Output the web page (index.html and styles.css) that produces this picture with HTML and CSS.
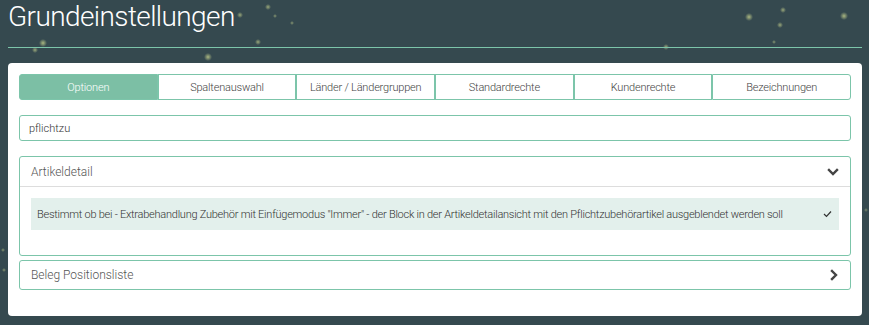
FILE: index.html
```html
<!DOCTYPE html>
<html lang="de">
<head>
  <meta charset="UTF-8">
  <title>Grundeinstellungen</title>
  <link rel="stylesheet" href="styles.css">
</head>
<body>
  <h1 class="page-title">Grundeinstellungen</h1>

  <div class="card">
    <!-- Reiter -->
    <div class="tabs">
      <div class="tab active">Optionen</div>
      <div class="tab">Spaltenauswahl</div>
      <div class="tab">Länder / Ländergruppen</div>
      <div class="tab">Standardrechte</div>
      <div class="tab">Kundenrechte</div>
      <div class="tab">Bezeichnungen</div>
    </div>

    <input class="search" type="text" value="pflichtzu">

    <!-- Gruppen -->
    <div class="panel">
      <div class="panel-head">
        <span>Artikeldetail</span>
        <svg class="chev" width="12" height="12" viewBox="0 0 12 12"><polyline points="2,4 6,8 10,4" fill="none" stroke="#444" stroke-width="2.4" stroke-linecap="square"/></svg>
      </div>
      <div class="panel-body">
        <div class="option">
          <span>Bestimmt ob bei - Extrabehandlung Zubehör mit Einfügemodus "Immer" - der Block in der Artikeldetailansicht mit den Pflichtzubehörartikel ausgeblendet werden soll</span>
          <svg width="9" height="8" viewBox="0 0 9 8"><polyline points="1,4 3.5,6.5 8,1.5" fill="none" stroke="#333" stroke-width="1.2"/></svg>
        </div>
      </div>
    </div>

    <div class="panel">
      <div class="panel-head closed">
        <span>Beleg Positionsliste</span>
        <svg class="chev" width="12" height="12" viewBox="0 0 12 12"><polyline points="5,2 9,6 5,10" fill="none" stroke="#444" stroke-width="2.4" stroke-linecap="square"/></svg>
      </div>
    </div>
  </div>
</body>
</html>
```

FILE: styles.css
```css
*,*::before,*::after{box-sizing:border-box}
html,body{height:100%}
body {
  margin:0;
  padding:0 7px 0 8px;
  overflow:hidden;
  font-family:Roboto,"Noto Sans",Arial,sans-serif;
  font-weight:300;
  color:#444;
  background-color:#35494f;
  /* Lichtpunkte im Hintergrund */
  background-image:
    radial-gradient(circle at 43px 43px, rgba(220,230,150,.7) 0, rgba(220,230,150,0) 4px),
    radial-gradient(circle at 35px 50px, rgba(220,230,150,.6) 0, rgba(220,230,150,0) 3px),
    radial-gradient(circle at 208px 57px, rgba(220,230,150,.7) 0, rgba(220,230,150,0) 4px),
    radial-gradient(circle at 240px 15px, rgba(220,230,150,.6) 0, rgba(220,230,150,0) 3px),
    radial-gradient(circle at 258px 42px, rgba(220,230,150,.6) 0, rgba(220,230,150,0) 3px),
    radial-gradient(circle at 268px 7px, rgba(220,230,150,.6) 0, rgba(220,230,150,0) 3px),
    radial-gradient(circle at 275px 16px, rgba(220,230,150,.5) 0, rgba(220,230,150,0) 2px),
    radial-gradient(circle at 292px 23px, rgba(220,230,150,.5) 0, rgba(220,230,150,0) 2px),
    radial-gradient(circle at 666px 47px, rgba(220,230,150,.6) 0, rgba(220,230,150,0) 3px),
    radial-gradient(circle at 749px 17px, rgba(220,230,150,.7) 0, rgba(220,230,150,0) 4px),
    radial-gradient(circle at 783px 10px, rgba(220,230,150,.6) 0, rgba(220,230,150,0) 3px),
    radial-gradient(circle at 780px 25px, rgba(220,230,150,.6) 0, rgba(220,230,150,0) 3px),
    radial-gradient(circle at 774px 42px, rgba(220,230,150,.5) 0, rgba(220,230,150,0) 2px),
    radial-gradient(circle at 844px 16px, rgba(220,230,150,.7) 0, rgba(220,230,150,0) 4px),
    radial-gradient(circle at 4px 270px, rgba(220,230,150,.5) 0, rgba(220,230,150,0) 2px),
    radial-gradient(circle at 3px 250px, rgba(220,230,150,.5) 0, rgba(220,230,150,0) 2px),
    radial-gradient(circle at 866px 210px, rgba(220,230,150,.4) 0, rgba(220,230,150,0) 2px);
  background-repeat:no-repeat;
}

/* ===== KOPF ===== */
.page-title {
  margin:0;
  padding:1px 0 0 0;
  height:48px;
  border-bottom:1px solid #7cc5aa;
  color:#fff;
  font-weight:300;
  font-size:28px;
  line-height:32px;
  letter-spacing:-.6px;
}

/* ===== KARTE ===== */
.card {
  margin-top:15px;
  background:#fff;
  border-radius:4px;
  padding:11px 11px 26px;
  display:flex;
  flex-direction:column;
}

/* ===== REITER ===== */
.tabs {
  display:grid;
  grid-template-columns:repeat(6,1fr);
  height:26px;
}
.tab {
  border:1px solid #7cc5aa;
  display:flex;
  align-items:center;
  justify-content:center;
  font-size:11px;
  letter-spacing:-.2px;
  color:#444;
}
.tab:first-child{border-radius:3px 0 0 3px}
.tab:last-child{border-radius:0 3px 3px 0}
.tab.active {
  background:#7cbfa5;
  color:#fff;
}

/* ===== SUCHE ===== */
.search {
  margin-top:15px;
  height:26px;
  border:1px solid #7cc5aa;
  border-radius:3px;
  padding:0 9px;
  font-family:inherit;
  font-weight:300;
  font-size:11px;
  color:#333;
  outline:none;
}

/* ===== GRUPPEN ===== */
.panel {
  margin-top:15px;
  border:1px solid #7cc5aa;
  border-radius:3px;
}
.panel + .panel{margin-top:4px}
.panel-head {
  height:30px;
  display:flex;
  align-items:center;
  justify-content:space-between;
  padding:0 11px 0 11px;
  border-bottom:1px solid #ddd;
  font-size:12px;
  color:#555;
}
.panel-head.closed{border-bottom:none;height:28px}
.panel-body {
  padding:11px 11px 25px;
}
.option {
  height:32px;
  background:#e3f0ec;
  display:flex;
  align-items:center;
  justify-content:space-between;
  padding:0 7px 0 6px;
  font-size:11px;
  letter-spacing:-.25px;
  color:#333;
}
```
